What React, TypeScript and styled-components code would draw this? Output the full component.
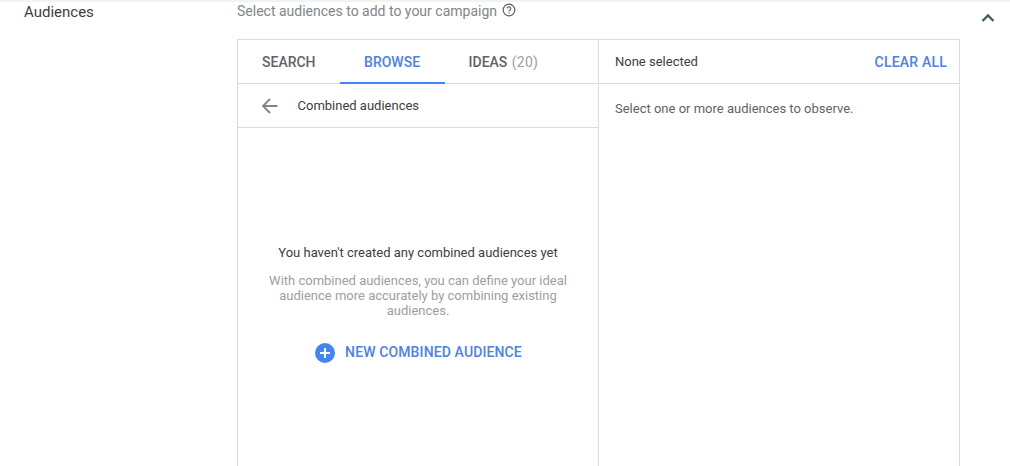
import styled, { createGlobalStyle } from 'styled-components';

const GlobalStyle = createGlobalStyle`
  html, body {
    margin: 0;
    padding: 0;
    background: #fff;
    overflow: hidden;
  }
  body {
    font-family: Roboto, "Liberation Sans", sans-serif;
  }
`;

const Page = styled.div`
  width: 1010px;
  height: 466px;
  overflow: hidden;
  display: grid;
  grid-template-columns: 237px 723px 50px;
  border-top: 2px solid #f3f3f3;
  box-sizing: border-box;
`;

const Title = styled.div`
  padding: 0 0 0 24px;
  font-size: 15px;
  line-height: 20px;
  color: #3c4043;
`;

const Main = styled.div`
  display: flex;
  flex-direction: column;
  min-width: 0;
`;

const Hint = styled.div`
  display: flex;
  align-items: center;
  gap: 5px;
  height: 37px;
  padding-bottom: 19px;
  box-sizing: border-box;
  font-size: 14px;
  color: #80868b;

  svg {
    margin-top: -3px;
  }
`;

const Chevron = styled.div`
  padding: 6px 0 0 21px;
`;

const Panel = styled.div`
  flex: 1;
  display: grid;
  grid-template-columns: 360px 1fr;
  border: 1px solid #dadce0;
  border-bottom: none;
`;

const Column = styled.div`
  display: flex;
  flex-direction: column;
  min-width: 0;

  & + & {
    border-left: 1px solid #dadce0;
  }
`;

const Tabs = styled.div`
  display: flex;
  height: 44px;
  box-sizing: border-box;
  border-bottom: 1px solid #dadce0;
`;

const Tab = styled.div<{ $active?: boolean }>`
  display: flex;
  align-items: center;
  justify-content: center;
  gap: 4.5px;
  width: ${(p) => (p.$active ? '105px' : 'auto')};
  padding: ${(p) => (p.$active ? '2px 0 0' : '0 24px')};
  height: 44px;
  box-sizing: border-box;
  font-size: 14px;
  font-weight: 500;
  color: ${(p) => (p.$active ? '#4b80f3' : '#5f6368')};
  border-bottom: ${(p) => (p.$active ? '2px solid #4285f4' : 'none')};
`;

const Count = styled.span`
  font-weight: 400;
  letter-spacing: 0.2px;
  color: #9aa0a6;
`;

const BackRow = styled.div`
  display: flex;
  align-items: center;
  height: 44px;
  box-sizing: border-box;
  padding-left: 22px;
  gap: 17.5px;
  border-bottom: 1px solid #dadce0;
  font-size: 13px;
  color: #3c4043;
`;

const Empty = styled.div`
  display: flex;
  flex-direction: column;
  align-items: center;
  padding-top: 117px;
  text-align: center;
`;

const EmptyTitle = styled.div`
  font-size: 13px;
  line-height: 16px;
  color: #3c4043;
`;

const EmptyText = styled.div`
  width: 310px;
  margin-top: 12px;
  font-size: 13px;
  line-height: 15px;
  color: #9aa0a6;
`;

const AddButton = styled.div`
  display: flex;
  align-items: center;
  gap: 10px;
  margin: 24px 0 0 1px;
  font-size: 14px;
  font-weight: 500;
  letter-spacing: 0.12px;
  color: #4b80f3;

  svg {
    margin: 1px 0 -1px;
  }
`;

const SummaryHead = styled.div`
  display: flex;
  align-items: center;
  justify-content: space-between;
  height: 44px;
  box-sizing: border-box;
  padding: 0 12px 0 16px;
  border-bottom: 1px solid #dadce0;
  font-size: 13px;
  color: #3c4043;
`;

const ClearAll = styled.span`
  font-size: 14px;
  font-weight: 500;
  letter-spacing: 0.2px;
  color: #4b80f3;
`;

const SummaryBody = styled.div`
  padding: 17px 16px;
  font-size: 13px;
  line-height: 16px;
  color: #5f6368;
`;

export default function App() {
  return (
    <>
      <GlobalStyle />
      <Page>
        <Title>Audiences</Title>
        <Main>
          <Hint>
            Select audiences to add to your campaign
            <svg width="14" height="14" viewBox="0 0 24 24" fill="none" stroke="#5a5e62" strokeWidth="2">
              <circle cx="12" cy="12" r="10" />
              <path d="M9 9.5a3 3 0 1 1 4.6 2.5c-1 .7-1.6 1.3-1.6 2.5" />
              <path d="M12 16.5v2" />
            </svg>
          </Hint>
          <Panel>
            <Column>
              <Tabs>
                <Tab>SEARCH</Tab>
                <Tab $active>BROWSE</Tab>
                <Tab>
                  IDEAS <Count>(20)</Count>
                </Tab>
              </Tabs>
              <BackRow>
                <svg width="20" height="20" viewBox="0 0 20 20" fill="none" stroke="#80868b" strokeWidth="1.8">
                  <path d="M17.5 10H3M10 3l-7 7 7 7" />
                </svg>
                Combined audiences
              </BackRow>
              <Empty>
                <EmptyTitle>You haven't created any combined audiences yet</EmptyTitle>
                <EmptyText>
                  With combined audiences, you can define your ideal audience more accurately by combining existing audiences.
                </EmptyText>
                <AddButton>
                  <svg width="20" height="20" viewBox="0 0 20 20">
                    <circle cx="10" cy="10" r="10" fill="#4285f4" />
                    <path d="M10 5v10M5 10h10" stroke="#fff" strokeWidth="2" />
                  </svg>
                  NEW COMBINED AUDIENCE
                </AddButton>
              </Empty>
            </Column>
            <Column>
              <SummaryHead>
                None selected
                <ClearAll>CLEAR ALL</ClearAll>
              </SummaryHead>
              <SummaryBody>Select one or more audiences to observe.</SummaryBody>
            </Column>
          </Panel>
        </Main>
        <Chevron>
          <svg width="14" height="10" viewBox="0 0 14 10" fill="none" stroke="#455a64" strokeWidth="2.4">
            <path d="M1.5 8l5.5-5.5 5.5 5.5" />
          </svg>
        </Chevron>
      </Page>
    </>
  );
}
